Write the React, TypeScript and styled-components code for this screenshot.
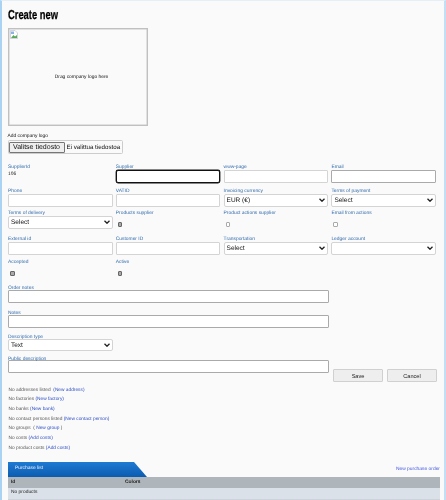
import React from "react";
import styled, { createGlobalStyle } from "styled-components";

const Global = createGlobalStyle`
  html, body { margin: 0; padding: 0; background: #fafafa; }
  body { font-family: "Liberation Sans", Arial, sans-serif; width: 446px; height: 500px; overflow: hidden; text-rendering: geometricPrecision; }
  * { box-sizing: border-box; }
`;
const Page = styled.div`
  width: 446px; height: 500px; overflow: hidden;
  background: #fafafa;
  border-left: 2px solid #a9d2f3; border-right: 2px solid #c3dff5; border-top: 1px solid #e4eff8;
  padding: 6px 4px 0 5px;
  display: flex; flex-direction: column;
  filter: blur(.2px);
`;
const Title = styled.h1`
  margin: -0.5px 0 0.5px 1px; font-size: 13px; line-height: 16px; font-weight: 700; color: #000; height: 21px;
  transform: scaleX(.72); transform-origin: left; -webkit-text-stroke: .25px #000;
`;
const Drop = styled.div`
  width: 140px; height: 99px; margin-left: 0.5px; padding-left: 8px; border: 1px solid #c0c0c0;
  box-shadow: inset 0 0 0 .5px #c8c8c8;
  position: relative; display: flex; align-items: center; justify-content: center;
  font-size: 4.9px; color: #111;
`;
const Broken = styled.svg`
  position: absolute; left: 1px; top: 1px; width: 8px; height: 9px;
`;
const LogoLabel = styled.div`
  margin-top: 7px; font-size: 4.9px; line-height: 7px; color: #111; margin-left: .5px;
`;
const FileBox = styled.div`
  margin-left: .5px; width: 115px; height: 14px; border: 1px solid #ccc; border-radius: 1.5px;
  display: flex; align-items: center; font-size: 6.2px; color: #111; white-space: nowrap; background: #fafafa;
`;
const FileButton = styled.span`
  display: block; height: 11px; line-height: 9.5px; width: 56px; font-size: 7px; text-align: center; background: #efefef; border: 1px solid #767676; margin-right: 2px; border-radius: 1px;
`;
const Grid = styled.div`
  display: grid; grid-template-columns: repeat(4, 104.5px); column-gap: 3.3px; margin-left: 1px; margin-top: 9px;
`;
const Field = styled.div<{ $h?: number }>`
  height: ${(p) => p.$h ?? 24}px; display: flex; flex-direction: column;
`;
const Label = styled.label<{ $lh?: number }>`
  display: block; font-size: 4.9px; line-height: ${(p) => p.$lh ?? 10}px; height: 7px; color: #2f6aab; white-space: nowrap;
`;
const Value = styled.div`
  font-size: 4.9px; color: #111; line-height: 8px; margin-top: 1px;
`;
const Input = styled.input<{ $focus?: boolean; $dark?: boolean; $w?: number }>`
  display: block; width: ${(p) => (p.$w ? p.$w + "px" : "100%")}; height: 13px; padding: 0; outline: none; background: #fff; border-radius: 1px;
  border: 1px solid ${(p) => (p.$focus ? "#111" : p.$dark ? "#aaa" : "#d4d4d4")};
  ${(p) => p.$focus && "box-shadow: 0 0 0 .4px #111; border-radius: 2px;"}
`;
const SelectBox = styled.div<{ $w?: number }>`
  height: 12.5px; width: ${(p) => (p.$w ? p.$w + "px" : "100%")}; background: #fff; border: 1px solid #d4d4d4; border-radius: 2px;
  display: flex; align-items: center; justify-content: space-between; padding: 0 2px 0 2px;
  font-size: 6.5px; color: #111;
`;
const Chev = styled.svg`
  width: 6px; height: 4px; flex: none;
`;
const Check = styled.span<{ $on?: boolean }>`
  display: block; width: 4.5px; height: 4.5px; margin: 6px 0 0 2px; border-radius: 1px;
  border: .7px solid ${(p) => (p.$on ? "#666" : "#aaa")}; background: ${(p) => (p.$on ? "#aaa" : "#fff")};
`;
const Wide = styled.div<{ $h: number }>`
  width: 321px; margin-left: 1px; height: ${(p) => p.$h}px;
`;
const BottomRow = styled.div`
  display: flex; margin-left: 1px; align-items: flex-start; height: 29px;
`;
const Buttons = styled.div`
  display: flex; gap: 4px; margin-left: 4px; margin-top: 16px;
`;
const Btn = styled.button<{ $w: number }>`
  width: ${(p) => p.$w}px; height: 13px; padding: 0; font: 5.6px "Liberation Sans", Arial, sans-serif; color: #222;
  background: #eee; border: 1px solid #d0d0d0; border-radius: 1px;
`;
const Lines = styled.div`
  margin: 3.5px 0 0 1.5px; display: flex; flex-direction: column;
`;
const Line = styled.div`
  height: 9.7px; line-height: 9.7px; font-size: 4.8px; color: #555; white-space: pre;
`;
const A = styled.a`
  color: #2a4cc4;
`;
const TabRow = styled.div`
  display: flex; justify-content: space-between; align-items: flex-end; margin: 8.5px 0 0 1px; height: 15px;
`;
const Tab = styled.div`
  width: 139px; height: 15px; padding-left: 7px; font-size: 4.9px; line-height: 13px; color: #f0f6fd;
  background: linear-gradient(#1f7ad2, #0b5cb0);
  clip-path: polygon(0 0, 126px 0, 100% 100%, 0 100%);
`;
const Right = styled.a`
  font-size: 4.9px; line-height: 10px; color: #3f58e0; margin-bottom: 2px;
`;
const Table = styled.div`
  margin: 0 0 0 1px; width: 432px; border-bottom: 1px solid #cdd3d8;
`;
const Head = styled.div`
  display: grid; grid-template-columns: 114px 1fr; height: 11px; background: #aeb5bb; align-items: center; padding-left: 3px;
  font-size: 4.9px; font-weight: 700; color: #222;
`;
const Row = styled.div`
  height: 11px; line-height: 10px; background: #dae1e8; padding-left: 3px; font-size: 4.9px; color: #222;
`;

const Arrow = () => (
  <Chev viewBox="0 0 12 8"><path d="M1 1.5 6 6.5 11 1.5" fill="none" stroke="#222" strokeWidth="2.6" /></Chev>
);
const Sel = ({ text, w }: { text?: string; w?: number }) => (
  <SelectBox $w={w}><span>{text}</span><Arrow /></SelectBox>
);

export default function App() {
  return (
    <Page>
      <Global />
      <Title>Create new</Title>
      <Drop>
        <Broken viewBox="0 0 16 18">
          <path d="M1 1h9l5 5v11H1z" fill="#fff" stroke="#aab" />
          <path d="M2 16l5-6 3 3 4-3v6z" fill="#5aa85a" />
          <path d="M2 3h6v5H2z" fill="#8ab4e8" />
        </Broken>
        Drag company logo here
      </Drop>
      <LogoLabel>Add company logo</LogoLabel>
      <FileBox><FileButton>Valitse tiedosto</FileButton>Ei valittua tiedostoa</FileBox>
      <Grid>
        <Field><Label>SupplierId</Label><Value>106</Value></Field>
        <Field><Label>Supplier</Label><Input $focus /></Field>
        <Field><Label>www-page</Label><Input /></Field>
        <Field><Label>Email</Label><Input $dark /></Field>
        <Field $h={22}><Label>Phone</Label><Input /></Field>
        <Field $h={22}><Label>VATID</Label><Input /></Field>
        <Field $h={22}><Label>Invoicing currency</Label><Sel text="EUR (€)" /></Field>
        <Field $h={22}><Label>Terms of payment</Label><Sel text="Select" /></Field>
        <Field $h={26}><Label>Terms of delivery</Label><Sel text="Select" /></Field>
        <Field $h={26}><Label>Products supplier</Label><Check $on /></Field>
        <Field $h={26}><Label>Product actions supplier</Label><Check /></Field>
        <Field $h={26}><Label>Email from actions</Label><Check /></Field>
        <Field $h={23}><Label>External id</Label><Input /></Field>
        <Field $h={23}><Label>Customer ID</Label><Input /></Field>
        <Field $h={23}><Label>Transportation</Label><Sel text="Select" /></Field>
        <Field $h={23}><Label>Ledger account</Label><Sel /></Field>
        <Field $h={25}><Label>Accepted</Label><Check $on /></Field>
        <Field $h={25}><Label>Active</Label><Check $on /></Field>
      </Grid>
      <Wide $h={25}><Label $lh={12}>Order notes</Label><Input $dark /></Wide>
      <Wide $h={24}><Label $lh={12}>Notes</Label><Input $dark /></Wide>
      <Wide $h={21.5}><Label $lh={12}>Description type</Label><Sel text="Text" w={105} /></Wide>
      <BottomRow>
        <div><Label $lh={14}>Public description</Label><Input $dark $w={321} /></div>
        <Buttons><Btn $w={50}>Save</Btn><Btn $w={50}>Cancel</Btn></Buttons>
      </BottomRow>
      <Lines>
        <Line>No addresses listed  <A>(New address)</A></Line>
        <Line>No factories <A>(New factory)</A></Line>
        <Line>No banks <A>(New bank)</A></Line>
        <Line>No contact persons listed <A>(New contact person)</A></Line>
        <Line>No groups  ( <A>New group</A> )</Line>
        <Line>No costs <A>(Add costs)</A></Line>
        <Line>No product costs <A>(Add costs)</A></Line>
      </Lines>
      <TabRow><Tab>Purchase list</Tab><Right>New purchase order</Right></TabRow>
      <Table>
        <Head><span>Id</span><span>Colors</span></Head>
        <Row>No products</Row>
      </Table>
    </Page>
  );
}
